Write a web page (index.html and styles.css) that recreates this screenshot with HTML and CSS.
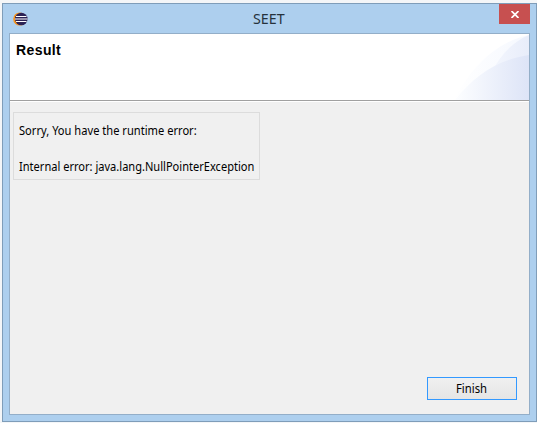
FILE: index.html
```html
<!DOCTYPE html>
<html lang="en">
<head>
<meta charset="utf-8">
<title>SEET</title>
<link rel="stylesheet" href="styles.css">
</head>
<body>
<main class="window">
  <header class="titlebar">
    <svg class="app-icon" viewBox="0 0 15 14">
      <circle cx="6.8" cy="7" r="6.6" fill="#f7941e"/>
      <circle cx="8.3" cy="7" r="6.3" fill="#2c2255"/>
      <path d="M3 4.5h10.5M2 7h12.5M3 9.5h10.5" stroke="#fff" stroke-width="1.2"/>
    </svg>
    <h1 class="title"><span>SEET</span></h1>
    <button class="close" aria-label="Close">
      <svg viewBox="0 0 8 7"><path d="M.5 0 7.5 7M7.5 0 .5 7" stroke="#fff" stroke-width="1.7"/></svg>
    </button>
  </header>
  <section class="client">
    <div class="banner">
      <h2 class="heading"><span>Result</span></h2>
      <svg class="swoosh" viewBox="0 0 75 66">
        <defs>
          <linearGradient id="outer"><stop offset="0" stop-color="#fff"/><stop offset="1" stop-color="#f5f8fe"/></linearGradient>
          <linearGradient id="mid"><stop offset="0" stop-color="#f3f6fd"/><stop offset="1" stop-color="#e8edfa"/></linearGradient>
          <linearGradient id="inner"><stop offset="0" stop-color="#fdfeff"/><stop offset="1" stop-color="#dde4f7"/></linearGradient>
        </defs>
        <path d="M0 66C14 38 40 8 75 1V66Z" fill="url(#outer)"/>
        <path d="M39 36C46 22 58 8 75 1V66H39Z" fill="url(#mid)"/>
        <path d="M1 66C20 42 43 26 75 21V66Z" fill="url(#inner)"/>
      </svg>
    </div>
    <div class="body">
      <div class="message">
        <p><span class="line-one">Sorry, You have the runtime error:</span></p>
        <p><span class="line-two">Internal error: java.lang.NullPointerException</span></p>
      </div>
      <button class="finish"><span>Finish</span></button>
    </div>
  </section>
</main>
</body>
</html>
```
FILE: styles.css
```css
* { box-sizing: border-box; margin: 0; padding: 0; }
body {
  height: 423px;
  padding: 3px 0 1px 2px;
  overflow: hidden;
  background: #f4f6f8;
  font: 12px/18px "Noto Sans", "Open Sans", sans-serif;
  color: #000;
}
.window {
  width: 535px;
  height: 419px;
  padding: 0 6px 6px;
  border: 1px solid #7f9db9;
  background: #adcfee;
}
.titlebar {
  display: flex;
  align-items: flex-start;
  height: 29px;
}
.app-icon { width: 15px; height: 14px; margin: 8px 0 0 4px; }
.title {
  flex: 1;
  padding-left: 225px;
  font-size: 15px;
  font-weight: 400;
  line-height: 28px;
  color: #26323c;
}
.title span, .heading span, .message span, .finish span {
  display: inline-block;
  transform-origin: left;
  white-space: nowrap;
}
.title span { transform: scaleX(.95); }
.close {
  display: flex;
  align-items: center;
  justify-content: center;
  width: 31px;
  height: 20px;
  border: 0;
  background: #c75050;
}
.close svg { width: 8px; height: 7px; }
.client {
  display: flex;
  flex-direction: column;
  width: 521px;
  height: 382px;
  border: 1px solid #93aec8;
  background: #f0f0f0;
}
.banner {
  display: flex;
  justify-content: space-between;
  height: 67px;
  border-bottom: 1px solid #a0a0a0;
  background: #fff;
}
.heading {
  padding: 7px 0 0 6px;
  font: bold 14px/18px "Liberation Sans", Arial, sans-serif;
}
.heading span { letter-spacing: .4px; }
.swoosh { width: 75px; height: 66px; }
.body {
  display: flex;
  flex: 1;
  flex-direction: column;
  align-items: flex-start;
  justify-content: space-between;
  padding: 10px 12px 14px 3px;
  border-top: 1px solid #fff;
}
.message {
  display: grid;
  align-content: start;
  gap: 18px;
  width: 247px;
  height: 68px;
  padding: 9px 0 0 5px;
  border: 1px solid #dcdcdc;
}
.message p { height: 18px; }
.line-one { transform: scaleX(.927); }
.line-two { transform: scaleX(.922); }
.finish {
  align-self: flex-end;
  width: 90px;
  height: 23px;
  border: 1px solid #3399ff;
  background: linear-gradient(#f0f0f0, #e5e5e5);
  font: inherit;
}
.finish span { transform: scaleX(.94); transform-origin: center; }
```
